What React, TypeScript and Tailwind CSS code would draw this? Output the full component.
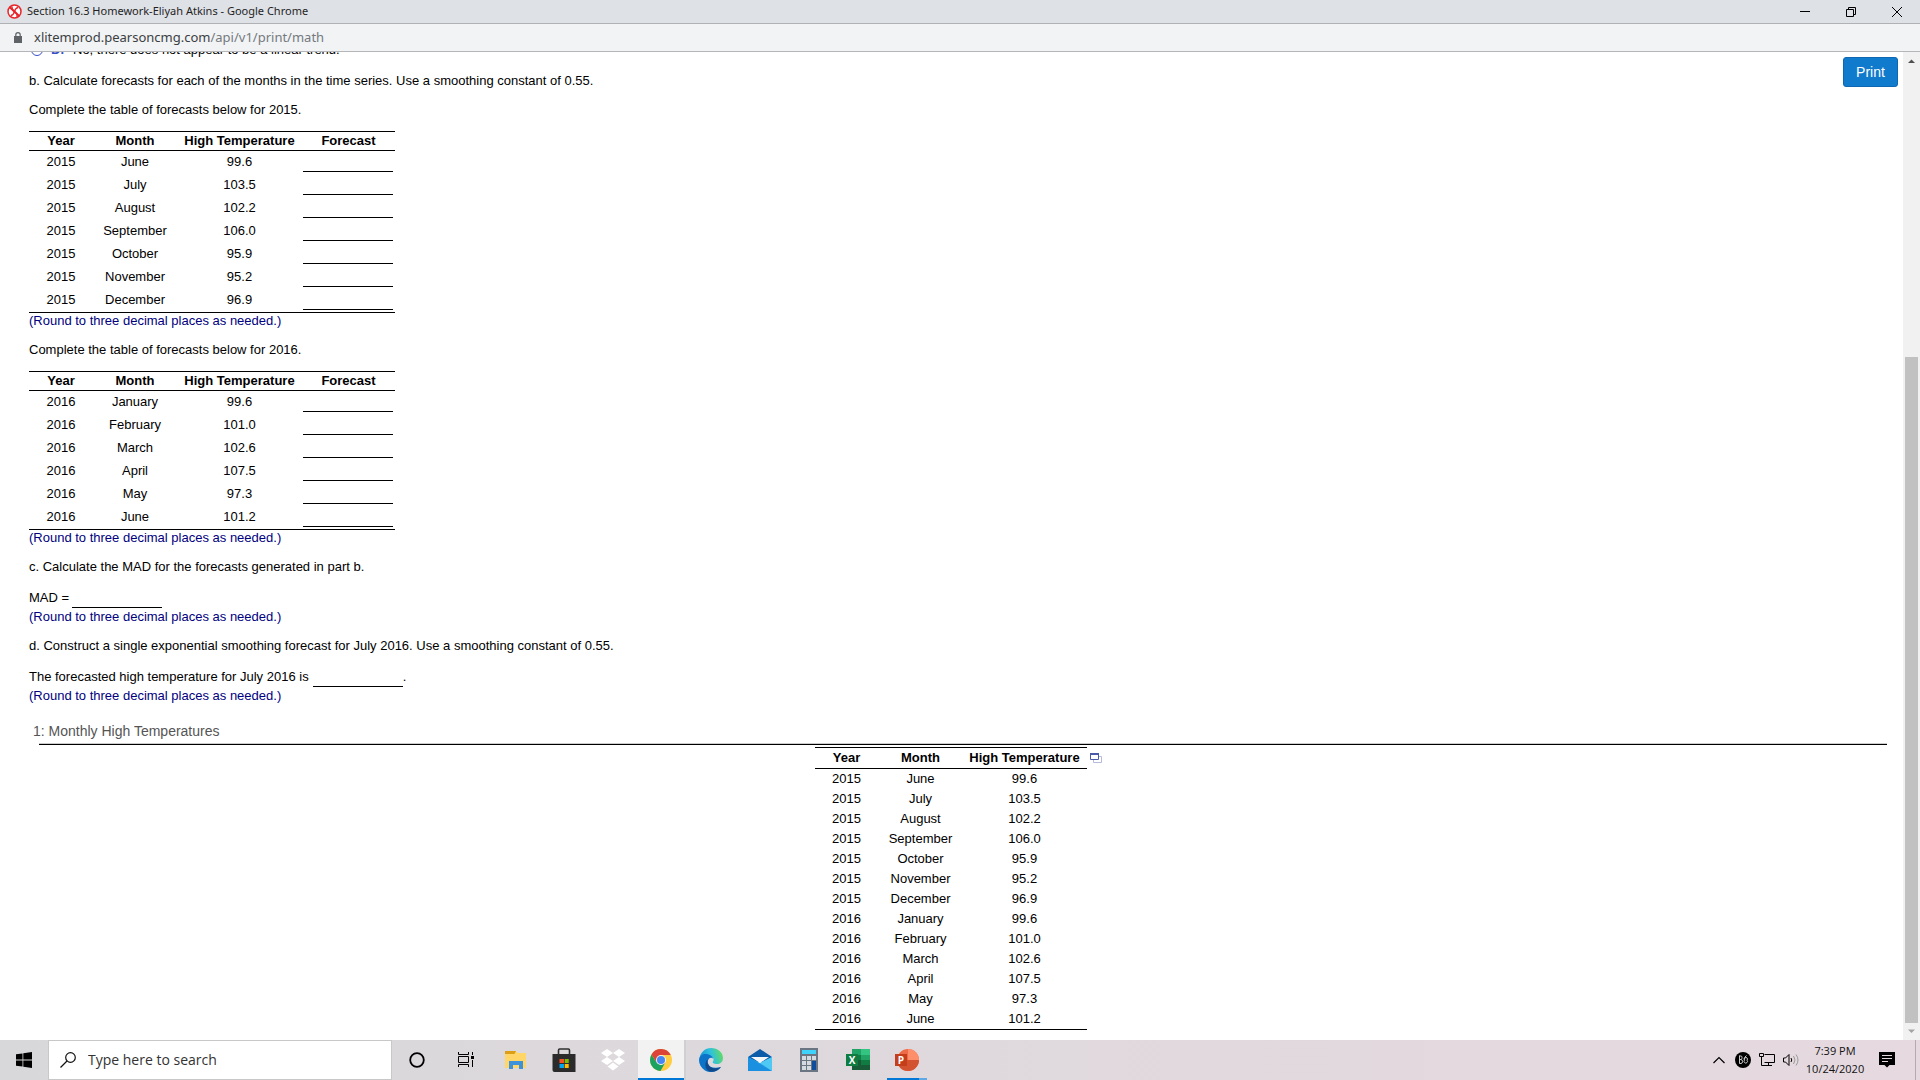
import React from 'react';

interface Reading {
  year: number;
  month: string;
  temp: string;
}

const READINGS: Reading[] = [
  { year: 2015, month: 'June', temp: '99.6' },
  { year: 2015, month: 'July', temp: '103.5' },
  { year: 2015, month: 'August', temp: '102.2' },
  { year: 2015, month: 'September', temp: '106.0' },
  { year: 2015, month: 'October', temp: '95.9' },
  { year: 2015, month: 'November', temp: '95.2' },
  { year: 2015, month: 'December', temp: '96.9' },
  { year: 2016, month: 'January', temp: '99.6' },
  { year: 2016, month: 'February', temp: '101.0' },
  { year: 2016, month: 'March', temp: '102.6' },
  { year: 2016, month: 'April', temp: '107.5' },
  { year: 2016, month: 'May', temp: '97.3' },
  { year: 2016, month: 'June', temp: '101.2' }
];

const Blank: React.FC<{ label: string }> = ({ label }) => (
  <input type="text" aria-label={label} className="block w-[90px] h-[21px] border-b border-black outline-none bg-transparent" />
);

const RoundNote: React.FC = () => (
  <p className="leading-4 text-[#000080]">(Round to three decimal places as needed.)</p>
);

const ForecastTable: React.FC<{ year: number }> = ({ year }) => (
  <table className="w-[366px] table-fixed border-separate border-spacing-0 border-y border-black text-center">
    <thead>
      <tr className="h-[19px] leading-[18px]">
        <th className="w-16 border-b border-black p-0">Year</th>
        <th className="w-[84px] border-b border-black p-0">Month</th>
        <th className="w-[125px] border-b border-black p-0">High Temperature</th>
        <th className="border-b border-black p-0">Forecast</th>
      </tr>
    </thead>
    <tbody>
      {READINGS.filter((r) => r.year === year).map((r) => (
        <tr key={r.month} className="h-[23px] align-top leading-[22px]">
          <td className="p-0">{r.year}</td>
          <td className="p-0">{r.month}</td>
          <td className="p-0">{r.temp}</td>
          <td className="p-0 pl-px">
            <Blank label={`Forecast for ${r.month} ${r.year}`} />
          </td>
        </tr>
      ))}
    </tbody>
  </table>
);

const TemperatureTable: React.FC = () => (
  <table className="w-[272px] table-fixed border-separate border-spacing-0 border-y border-black text-center">
    <thead>
      <tr className="h-[21px] leading-5">
        <th className="w-16 border-b border-black p-0">Year</th>
        <th className="w-[84px] border-b border-black p-0">Month</th>
        <th className="border-b border-black p-0">High Temperature</th>
      </tr>
    </thead>
    <tbody>
      {READINGS.map((r) => (
        <tr key={`${r.year}-${r.month}`} className="h-5 leading-5">
          <td className="p-0">{r.year}</td>
          <td className="p-0">{r.month}</td>
          <td className="p-0">{r.temp}</td>
        </tr>
      ))}
    </tbody>
  </table>
);

const TitleBar: React.FC = () => (
  <header className="flex h-6 shrink-0 items-center border-b border-[#b0b1b4] bg-[#dee1e6] pl-[7px] font-['Noto_Sans',sans-serif]">
    <svg viewBox="0 0 15 15" className="h-[15px] w-[15px]" fill="none" stroke="#e8262b">
      <circle cx="7.500" cy="7.500" r="6.500" fill="#fff" strokeWidth="1.500" />
      <path d="M2.800 3.200l9.400 8.800" strokeWidth="2" />
      <path d="M5 2.500q-.5 3 2.500 5t2.500 5.500M11 3.500q-2.500.5-3.500 4t-3.500 4" strokeWidth="1.300" />
    </svg>
    <h1 className="ml-[5px] flex-1 text-[11px] text-[#1f1f1f]">Section 16.3 Homework-Eliyah Atkins - Google Chrome</h1>
    <button aria-label="Minimize" className="flex h-full w-[46px] items-center justify-center">
      <svg viewBox="0 0 10 10" className="h-2.5 w-2.5"><path d="M0 4.500h10" stroke="#000" /></svg>
    </button>
    <button aria-label="Restore" className="flex h-full w-[46px] items-center justify-center">
      <svg viewBox="0 0 10 10" className="h-2.5 w-2.5" fill="none" stroke="#000">
        <path d="M.5 2.500h7v7h-7zM2.500 2.500v-2h7v7h-2" />
      </svg>
    </button>
    <button aria-label="Close" className="flex h-full w-[46px] items-center justify-center">
      <svg viewBox="0 0 10 10" className="h-2.5 w-2.5"><path d="M0 0l10 10M10 0L0 10" stroke="#000" /></svg>
    </button>
  </header>
);

const AddressBar: React.FC = () => (
  <div className="flex h-7 shrink-0 items-center border-b border-[#b5b6b9] bg-[#f1f3f4] pl-3.5 font-['Noto_Sans',sans-serif]">
    <svg viewBox="0 0 8 11" className="h-[11px] w-2">
      <path d="M0 4h8v7H0z" fill="#5f6368" />
      <path d="M1.800 4.500V2.800a2.200 2.200 0 014.400 0v1.700" fill="none" stroke="#5f6368" strokeWidth="1.200" />
    </svg>
    <p className="ml-3 text-[13px] text-[#3c4043]">
      xlitemprod.pearsoncmg.com<span className="text-[#75797e]">/api/v1/print/math</span>
    </p>
  </div>
);

const Scrollbar: React.FC = () => (
  <div className="flex w-[17px] shrink-0 flex-col items-center bg-[#f1f1f1]">
    <svg viewBox="0 0 17 17" className="h-[17px] w-[17px]"><path d="M5 11l3.500-3.500L12 11z" fill="#505050" /></svg>
    <div className="w-full grow-[288]" />
    <div className="w-[13px] grow-[666] bg-[#c1c1c1]" />
    <svg viewBox="0 0 17 17" className="h-[17px] w-[17px]"><path d="M5 6.500l3.500 3.500L12 6.500z" fill="#a3a3a3" /></svg>
  </div>
);

const ExplorerIcon: React.FC = () => (
  <svg viewBox="0 0 24 24" className="h-6 w-6">
    <path d="M2 3h11l1.500 2H23v15H2z" fill="#ffd667" />
    <path d="M2 3h11l-1.500 3H2z" fill="#dc9e14" />
    <path d="M6 21v-8h14v8h-4v-4h-6v4z" fill="#3d93d9" />
  </svg>
);

const StoreIcon: React.FC = () => (
  <svg viewBox="0 0 24 24" className="h-6 w-6">
    <path d="M6.500 7V2.200q0-1.200 1.200-1.200h8.600q1.200 0 1.200 1.200V7" fill="none" stroke="#303030" strokeWidth="1.600" />
    <path d="M.5 6h23v18H2.500q-2 0-2-2z" fill="#2b2b2b" />
    <path d="M7.500 11H12v4H7.500z" fill="#f25022" />
    <path d="M12.700 11h4v4h-4z" fill="#7fba00" />
    <path d="M7.500 16H12v4H7.500z" fill="#00a4ef" />
    <path d="M12.700 16h4v4h-4z" fill="#ffb900" />
  </svg>
);

const DropboxIcon: React.FC = () => (
  <svg viewBox="0 0 24 24" className="h-6 w-6" fill="#fff">
    <path d="M6 1l6 4-6 4-6-4zM18 1l6 4-6 4-6-4zM6 9l6 4-6 4-6-4zM18 9l6 4-6 4-6-4zM12 14.500l5.500 4-5.500 4-5.500-4z" />
  </svg>
);

const ChromeIcon: React.FC = () => (
  <svg viewBox="0 0 24 24" className="h-6 w-6">
    <circle cx="12" cy="12" r="11" fill="#ffcd40" />
    <path d="M2.500 6.500L7.700 14.500 12 17l4.300-2.500L11.500 23A11 11 0 012.500 6.500z" fill="#1aa260" />
    <path d="M2.500 6.500A11 11 0 0121.800 7H12l-4.300 7.500z" fill="#db4437" />
    <circle cx="12" cy="12" r="5" fill="#f1f1f1" />
    <circle cx="12" cy="12" r="4" fill="#4587f4" />
  </svg>
);

const EdgeIcon: React.FC = () => (
  <svg viewBox="0 0 24 24" className="h-6 w-6">
    <defs>
      <linearGradient id="edgeTop" x1="0" y1=".5" x2="1" y2=".3">
        <stop offset="0" stopColor="#1593d8" />
        <stop offset=".5" stopColor="#2fc1dd" />
        <stop offset="1" stopColor="#66dd5c" />
      </linearGradient>
    </defs>
    <path d="M.5 11A11.700 11.700 0 0112 0c7 0 12 4.500 12 10 0 4-3 6-6 6s-5-1-4-2.500 1-4-2-4.500S3 8 .5 11z" fill="url(#edgeTop)" />
    <path d="M0 12C.5 7 4.500 5.500 8 6s5.500 2.500 6 4.500c-3-2-6 1-5 5s6 5 13 3.500C18 25 10 25 6 22.500S0 16 0 12z" fill="#0c74c8" />
    <path d="M9 11c-1.500 2-.5 6 2.500 8s7 1.500 10.500 0C19 23 13 25 9.500 23S5 14 9 11z" fill="#114a8b" />
  </svg>
);

const MailIcon: React.FC = () => (
  <svg viewBox="0 0 24 24" className="h-6 w-6">
    <path d="M0 9l12-8 12 8v5H0z" fill="#0a5ba8" />
    <path d="M0 9l12 6 12-6v14H0z" fill="#28a8ea" />
    <path d="M0 9l24 14H0z" fill="#1b8fe0" />
    <path d="M12 15l12-6v14z" fill="#50c8f4" />
    <path d="M3 9h18l-9 6z" fill="#f4f6f8" />
  </svg>
);

const CalculatorIcon: React.FC = () => (
  <svg viewBox="0 0 24 24" className="h-6 w-6">
    <path d="M3 0h18v24H3z" fill="#6b7682" />
    <path d="M5 2h14v4H5z" fill="#3dd3fb" />
    <path d="M5 8h4v4H5zM10 8h4v4h-4zM15 8h4v4h-4zM5 13h4v4H5zM10 13h4v4h-4zM5 18h4v4H5zM10 18h4v4h-4z" fill="#d3dae0" />
    <path d="M15 13h4v9h-4z" fill="#0f4c9c" />
  </svg>
);

const ExcelIcon: React.FC = () => (
  <span className="relative block h-6 w-6">
    <svg viewBox="0 0 24 24" className="h-6 w-6">
      <path d="M6 1h9v6H6z" fill="#21a366" />
      <path d="M15 1h9v6h-9z" fill="#33c481" />
      <path d="M6 7h9v5H6z" fill="#107c41" />
      <path d="M15 7h9v5h-9z" fill="#21a366" />
      <path d="M6 12h9v10H6z" fill="#185c37" />
      <path d="M15 12h9v5h-9z" fill="#107c41" />
      <path d="M15 17h9v5h-9z" fill="#185c37" />
      <path d="M0 6h12v12H0z" fill="#107c41" />
    </svg>
    <span className="absolute left-0 top-1.5 w-3 text-center font-['Open_Sans',sans-serif] text-[10px] font-bold leading-3 text-white">X</span>
  </span>
);

const PowerPointIcon: React.FC = () => (
  <span className="relative block h-6 w-6">
    <svg viewBox="0 0 24 24" className="h-6 w-6">
      <circle cx="13" cy="12" r="11" fill="#ed6c47" />
      <path d="M13 1a11 11 0 0111 11H13z" fill="#ff8f6b" />
      <path d="M2 12h22a11 11 0 01-22 0z" fill="#d35230" />
      <path d="M0 6h12v12H0z" fill="#c43e1c" />
    </svg>
    <span className="absolute left-0 top-1.5 w-3 text-center font-['Open_Sans',sans-serif] text-[10px] font-bold leading-3 text-white">P</span>
  </span>
);

const CortanaIcon: React.FC = () => (
  <svg viewBox="0 0 24 24" className="h-6 w-6"><circle cx="12" cy="12" r="6.800" fill="none" stroke="#000" strokeWidth="1.800" /></svg>
);

const TaskViewIcon: React.FC = () => (
  <svg viewBox="0 0 24 24" className="h-6 w-6" fill="none" stroke="#000">
    <path d="M4.500 4v2.500h10V4M4.500 19v-2.500h10V19M4.500 8.500h10v6h-10zM18.500 4v3M18.500 12v7" />
    <path d="M17 8h3v3h-3z" fill="#000" stroke="none" />
  </svg>
);

const APPS = [
  { name: 'Cortana', icon: <CortanaIcon /> },
  { name: 'Task View', icon: <TaskViewIcon /> },
  { name: 'File Explorer', icon: <ExplorerIcon /> },
  { name: 'Microsoft Store', icon: <StoreIcon /> },
  { name: 'Dropbox', icon: <DropboxIcon /> },
  { name: 'Google Chrome', icon: <ChromeIcon />, active: true },
  { name: 'Microsoft Edge', icon: <EdgeIcon /> },
  { name: 'Mail', icon: <MailIcon /> },
  { name: 'Calculator', icon: <CalculatorIcon /> },
  { name: 'Excel', icon: <ExcelIcon /> },
  { name: 'PowerPoint', icon: <PowerPointIcon />, running: true }
];

const Taskbar: React.FC = () => (
  <footer className="flex h-10 shrink-0 items-stretch bg-linear-to-r from-[#d8d8da] to-[#e6d9e0] font-['Open_Sans',sans-serif]">
    <button aria-label="Start" className="flex w-12 items-center justify-center">
      <svg viewBox="0 0 16 16" className="h-4 w-4">
        <path d="M0 2.300L6.500 1.400v6.200H0zM7.300 1.300L16 0v7.600H7.300zM0 8.400h6.500v6.200L0 13.700zM7.300 8.400H16V16l-8.700-1.300z" />
      </svg>
    </button>
    <label className="flex w-[344px] items-center border border-[#c8c8c8] bg-white pl-[11px]">
      <svg viewBox="0 0 16 16" className="h-4 w-4" fill="none" stroke="#111" strokeWidth="1.200">
        <circle cx="10.500" cy="5.500" r="4.800" />
        <path d="M7 9L.5 15.500" />
      </svg>
      <input
        type="text"
        aria-label="Search"
        placeholder="Type here to search"
        className="ml-3 flex-1 text-sm outline-none placeholder:text-[#333]"
      />
    </label>
    <nav className="flex gap-px pl-px">
      {APPS.map((app) => (
        <button
          key={app.name}
          aria-label={app.name}
          className={`relative flex w-12 items-center justify-center ${app.active ? 'border-r-2 border-[#d0d0d2] bg-[#f2f2f2]' : ''}`}
        >
          {app.icon}
          {app.active && <span className="absolute inset-x-0 bottom-0 h-0.5 bg-[#0078d7]" />}
          {app.running && (
            <span className="absolute inset-x-1 bottom-0 h-0.5 border-r-8 border-[#5fa8e6] bg-[#0078d7]" />
          )}
        </button>
      ))}
    </nav>
    <div className="ml-auto flex items-center">
      <button aria-label="Show hidden icons" className="flex w-6 justify-center">
        <svg viewBox="0 0 12 8" className="h-2 w-3"><path d="M.5 7L6 1.500 11.500 7" fill="none" stroke="#000" strokeWidth="1.200" /></svg>
      </button>
      <button aria-label="Beats audio" className="flex w-6 justify-center">
        <svg viewBox="0 0 16 16" className="h-4 w-4">
          <circle cx="8" cy="8" r="8" />
          <path
            d="M4.500 3.500v8M4.500 4h1.500q1 0 1 1.500T6 7.500H4.500M6 7.500q1.500 0 1.500 2t-1.500 2H4.500M9.500 8.200a1.700 1.700 0 102.500 0 1.700 1.700 0 10-2.500 0M9.500 7.500q0-3 2-4"
            fill="none"
            stroke="#ddd"
            strokeWidth=".9"
          />
        </svg>
      </button>
      <button aria-label="Network" className="flex w-6 justify-center">
        <svg viewBox="0 0 16 14" className="h-3.5 w-4" fill="none" stroke="#000">
          <path d="M5.500 1.500h10v8h-10M5 12.500h8M9.500 9.500v3M.5 .5h4v3h-4zM2.500 3.500v9h3" />
        </svg>
      </button>
      <button aria-label="Volume" className="flex w-6 justify-center">
        <svg viewBox="0 0 16 14" className="h-3.5 w-4" fill="none" stroke="#000">
          <path d="M.5 5h2L6 1.500v11L2.500 9H.5z" />
          <path d="M8 5q1.500 2 0 4" />
          <path d="M10.500 3q3 4 0 8M13 1.500q4 5.500 0 11" stroke="#999" />
        </svg>
      </button>
      <div className="w-16 text-center text-[11px] leading-[18px] text-[#111]">
        <p>7:39 PM</p>
        <p>10/24/2020</p>
      </div>
      <button aria-label="Notifications" className="flex w-10 justify-center">
        <svg viewBox="0 0 16 16" className="h-4 w-4">
          <path d="M0 0h16v13h-5.500L8 15.500 5.500 13H0z" />
          <path d="M3 3.500h10M3 6.500h10M3 9.500h6" stroke="#e4d8de" />
        </svg>
      </button>
      <div className="ml-2 mr-1 h-10 w-px bg-[#b5aab0]" />
    </div>
  </footer>
);

export default function App() {
  return (
    <div className="flex h-screen flex-col overflow-hidden bg-white font-['Liberation_Sans',Arial,sans-serif] text-[13px] text-black">
      <TitleBar />
      <AddressBar />
      <div className="flex min-h-0 flex-1">
        <main className="relative min-w-0 flex-1 overflow-hidden">
          <button className="absolute right-[5px] top-[5px] h-[30px] w-[55px] rounded-[3px] border border-[#0d68b1] bg-[#107acc] text-sm text-white">
            Print
          </button>

          {/* last answer choice of part a, scrolled mostly out of view */}
          <label className="-mt-2.5 flex h-4 items-center pl-[31px] leading-4">
            <input type="radio" name="trend" className="h-3 w-3 appearance-none rounded-full border border-[#3a50c8]" />
            <span className="ml-2 w-[22px] font-bold text-[#3a50c8]">D.</span>
            No, there does not appear to be a linear trend.
          </label>

          <section className="pl-[29px]">
            <p className="mt-[15px] leading-4">
              b. Calculate forecasts for each of the months in the time series. Use a smoothing constant of 0.55.
            </p>
            <p className="my-[13px] leading-4">Complete the table of forecasts below for 2015.</p>
            <ForecastTable year={2015} />
            <RoundNote />
            <p className="my-[13px] leading-4">Complete the table of forecasts below for 2016.</p>
            <ForecastTable year={2016} />
            <RoundNote />
            <p className="mb-3 mt-[13px] leading-4">c. Calculate the MAD for the forecasts generated in part b.</p>
            <div className="flex leading-[22px]">
              <span className="mr-[3px]">MAD =</span>
              <Blank label="MAD" />
            </div>
            <RoundNote />
            <p className="mb-3 mt-[13px] leading-4">
              d. Construct a single exponential smoothing forecast for July 2016. Use a smoothing constant of 0.55.
            </p>
            <div className="flex leading-[22px]">
              <span className="mr-1">The forecasted high temperature for July 2016 is</span>
              <Blank label="Forecasted high temperature" />
              <span>.</span>
            </div>
            <RoundNote />
          </section>

          <h2 className="mt-[19px] pl-[33px] text-sm leading-4 text-[#555]">1: Monthly High Temperatures</h2>
          <hr className="ml-[39px] mr-4 mt-1 h-0.5 border-b border-t border-b-black border-t-[#ccc]" />
          <div className="mt-0.5 flex justify-center gap-[3px] pl-[13px]">
            <TemperatureTable />
            <button aria-label="Open table" className="mt-1.5 h-2.5 w-3">
              <svg viewBox="0 0 12 10" className="h-2.5 w-3">
                <path d="M3.500 3.500h8v6h-8z" fill="#fff" stroke="#b4bbdc" />
                <path d="M.5 .5h8v6h-8z" fill="#fff" stroke="#4a5aa8" />
                <path d="M0 0h9v2H0z" fill="#4a5aa8" />
              </svg>
            </button>
          </div>
        </main>
        <Scrollbar />
      </div>
      <Taskbar />
    </div>
  );
}
